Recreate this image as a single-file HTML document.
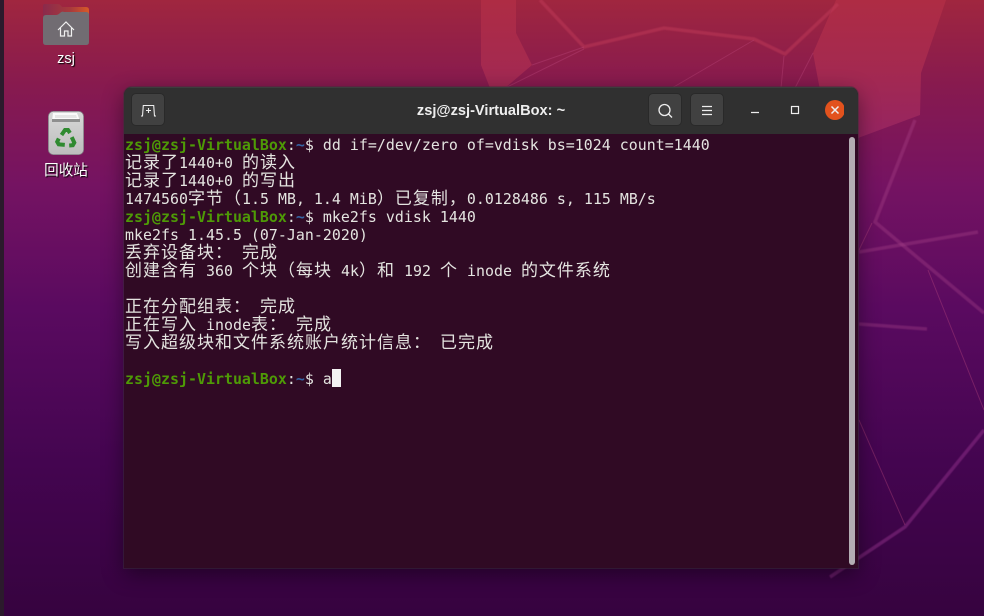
<!DOCTYPE html>
<html><head><meta charset="utf-8"><style>
html,body{margin:0;padding:0;width:984px;height:616px;overflow:hidden;background:#4a0a55}
#bg{position:absolute;left:0;top:0}
#dock{position:absolute;left:0;top:0;width:4px;height:616px;background:#2b1a2c}
.lbl{position:absolute;width:100px;left:16px;text-align:center;color:#fff;font:14.6px "Liberation Sans","Noto Sans CJK SC",sans-serif;text-shadow:1px 1px 1px #000;line-height:18px}
#win{position:absolute;left:124px;top:87px;width:734px;height:481px;background:#300a24;border-radius:8px 8px 0 0;box-shadow:0 0 0 1px rgba(60,50,60,.45),0 6px 22px rgba(0,0,0,.45);overflow:hidden}
#hdr{position:absolute;left:0;top:0;width:734px;height:47px;background:#303030;border-top:1px solid #3d3d3d;box-sizing:border-box}
.b{position:absolute;top:5px;width:34px;height:33px;box-sizing:border-box;background:#414141;border:1px solid #292929;border-radius:5px}
#title{position:absolute;left:0;width:734px;top:13px;text-align:center;color:#eee;font:bold 14.6px/20px "Liberation Sans",sans-serif}
.l{position:absolute;left:1px;height:18px;line-height:18px;white-space:pre;font-family:"DejaVu Sans Mono",monospace;font-size:14.9px;letter-spacing:.03px;color:#e4e4e0;filter:blur(.3px)}
.c{font-family:"Noto Sans CJK SC",sans-serif;font-size:17px;letter-spacing:1px}
.g{color:#4e9a06;font-weight:bold}.u{color:#3465a4;font-weight:bold}
</style></head><body>
<svg id="bg" width="984" height="616" viewBox="0 0 984 616">
<defs>
<linearGradient id="g" x1="0" y1="0" x2="0" y2="1">
<stop offset="0" stop-color="#a0263f"/><stop offset=".14" stop-color="#871a4f"/><stop offset=".3" stop-color="#751362"/><stop offset=".5" stop-color="#5a0a60"/><stop offset=".75" stop-color="#440550"/><stop offset="1" stop-color="#36033f"/>
</linearGradient>
<linearGradient id="p" gradientUnits="userSpaceOnUse" x1="0" y1="0" x2="0" y2="140"><stop offset="0" stop-color="#ae2c44"/><stop offset=".5" stop-color="#a42950"/><stop offset="1" stop-color="#952462"/></linearGradient>
</defs>
<rect width="984" height="616" fill="url(#g)"/>
<polygon points="481,0 516,0 516,33 532,65 505,88 490,88 481,65" fill="url(#p)"/>
<polygon points="836,0 946,0 921,73 920,115 858,138 820,90 813,53" fill="url(#p)"/>
<g fill="none" stroke-width="3.5" style="filter:blur(.4px)">
<path d="M540 0L584 47L664 28L754 39L785 54L838 4" stroke="#c03a58" stroke-opacity=".5"/>
<path d="M915 120L875 222L984 313" stroke="#b04a90" stroke-opacity=".32"/>
<path d="M859 252L978 232" stroke="#b04a90" stroke-opacity=".32"/>
<path d="M859 324L927 329" stroke="#b04a90" stroke-opacity=".32"/>
<path d="M830 577L905 527L984 430" stroke="#a03a96" stroke-opacity=".42"/>
</g>
<g fill="none" stroke="#c04a80" stroke-opacity=".36" stroke-width="1">
<path d="M532 65L584 47M505 88L584 49M754 40L672 88M784 56L781 88M813 53L795 88"/>
<path d="M872 223L859 250M928 270L984 410M859 420L905 525"/>
</g>
</svg>
<div id="dock"></div>
<svg style="position:absolute;left:40px;top:0" width="54" height="50" viewBox="0 0 54 50">
<defs><linearGradient id="o" x1="0" y1="0" x2="1" y2="0"><stop offset="0" stop-color="#8a2a4c"/><stop offset=".6" stop-color="#a83a3c"/><stop offset="1" stop-color="#d85a28"/></linearGradient></defs>
<path d="M3 16V6q0-2 2-2h13q2 0 4 3h24q3 0 3 3v6z" fill="url(#o)"/>
<path d="M3 18q0-3 3-3h10q2 0 4-2t4-1h22q3 0 3 3v27q0 3-3 3H6q-3 0-3-3z" fill="#716c72"/>
<path d="M18 30l8-8 8 8M20.5 28v8h4v-5h3.500v5h3.500v-8" fill="none" stroke="#f0f0f0" stroke-width="1.200"/>
</svg>
<div class="lbl" style="top:50px">zsj</div>
<svg style="position:absolute;left:46px;top:109px" width="40" height="48" viewBox="0 0 40 48">
<defs><linearGradient id="t" x1="0" y1="0" x2="0" y2="1"><stop offset="0" stop-color="#d8d8d8"/><stop offset="1" stop-color="#bdbdbd"/></linearGradient></defs>
<rect x="2.400" y="2.400" width="35.200" height="43.200" rx="5" fill="url(#t)" stroke="#857c85" stroke-width=".8"/>
<path d="M7 4h24l3 8H6z" fill="#fafafa"/><path d="M6 10l28 0v3H6z" fill="#8f8f8f"/><path d="M9 6h21l1 3H9z" fill="#e6e6e6"/>
<g fill="none" stroke="#2f8a30" stroke-width="4">
<path d="M15.500 26l3.500-5h3l2 3"/>
<g transform="rotate(120 20 30)"><path d="M15.500 26l3.500-5h3l2 3"/></g>
<g transform="rotate(240 20 30)"><path d="M15.500 26l3.500-5h3l2 3"/></g>
</g>
</svg>
<div class="lbl" style="top:161px;font-family:'Noto Sans CJK SC',sans-serif">回收站</div>
<div id="win">
<div id="hdr">
<div class="b" style="left:7px"><svg width="32" height="31" fill="none" stroke="#eee" stroke-width="1.100"><path d="M9 22h1.500l.8-10.500h10.400l.8 10.500h1.500M14 16.500h5M16.500 14v5"/></svg></div>
<div id="title">zsj@zsj-VirtualBox: ~</div>
<div class="b" style="left:524px"><svg width="32" height="31" fill="none" stroke="#eee" stroke-width="1.300"><circle cx="15.500" cy="16" r="5.500"/><path d="M19.500 20l3.500 3.500"/></svg></div>
<div class="b" style="left:566px"><svg width="32" height="31" stroke="#eee" stroke-width="1.200"><path d="M11 12.500h10M11 16.500h10M11 20.500h10"/></svg></div>
<svg style="position:absolute;left:620px;top:10px" width="100" height="26" fill="none" stroke="#eee">
<path d="M7 14.500h8" stroke-width="1.200"/><rect x="47.500" y="8.500" width="7" height="7" stroke-width="1.200"/>
<circle cx="91" cy="12" r="10" fill="#e2521d" stroke="none"/><path d="M87.500 8.500l7 7m0-7l-7 7" stroke-width="1.500"/></svg>
</div>
<div style="position:absolute;left:725px;top:50px;width:6px;height:428px;border-radius:3px;background:#b3adb3"></div>
<div class="l" style="top:49px"><span class="g">zsj@zsj-VirtualBox</span>:<span class="u">~</span>$ dd if=/dev/zero of=vdisk bs=1024 count=1440</div>
<div class="l" style="top:65px"><span class="c">记录了</span>1440+0 <span class="c">的读入</span></div>
<div class="l" style="top:83px"><span class="c">记录了</span>1440+0 <span class="c">的写出</span></div>
<div class="l" style="top:101px">1474560<span class="c">字节（</span>1.5 MB, 1.4 MiB<span class="c">）已复制，</span>0.0128486 s, 115 MB/s</div>
<div class="l" style="top:121px"><span class="g">zsj@zsj-VirtualBox</span>:<span class="u">~</span>$ mke2fs vdisk 1440</div>
<div class="l" style="top:139px">mke2fs 1.45.5 (07-Jan-2020)</div>
<div class="l" style="top:155px"><span class="c">丢弃设备块：</span> <span class="c">完成</span></div>
<div class="l" style="top:173px"><span class="c">创建含有</span> 360 <span class="c">个块（每块</span> 4k<span class="c">）和</span> 192 <span class="c">个</span> inode <span class="c">的文件系统</span></div>
<div class="l" style="top:209px"><span class="c">正在分配组表：</span> <span class="c">完成</span></div>
<div class="l" style="top:227px"><span class="c">正在写入</span> inode<span class="c">表：</span> <span class="c">完成</span></div>
<div class="l" style="top:245px"><span class="c">写入超级块和文件系统账户统计信息：</span> <span class="c">已完成</span></div>
<div class="l" style="top:283px"><span class="g">zsj@zsj-VirtualBox</span>:<span class="u">~</span>$ a</div>
<div style="position:absolute;left:208px;top:282px;width:9px;height:18px;background:#f2f2f2"></div>
</div>
</body></html>
